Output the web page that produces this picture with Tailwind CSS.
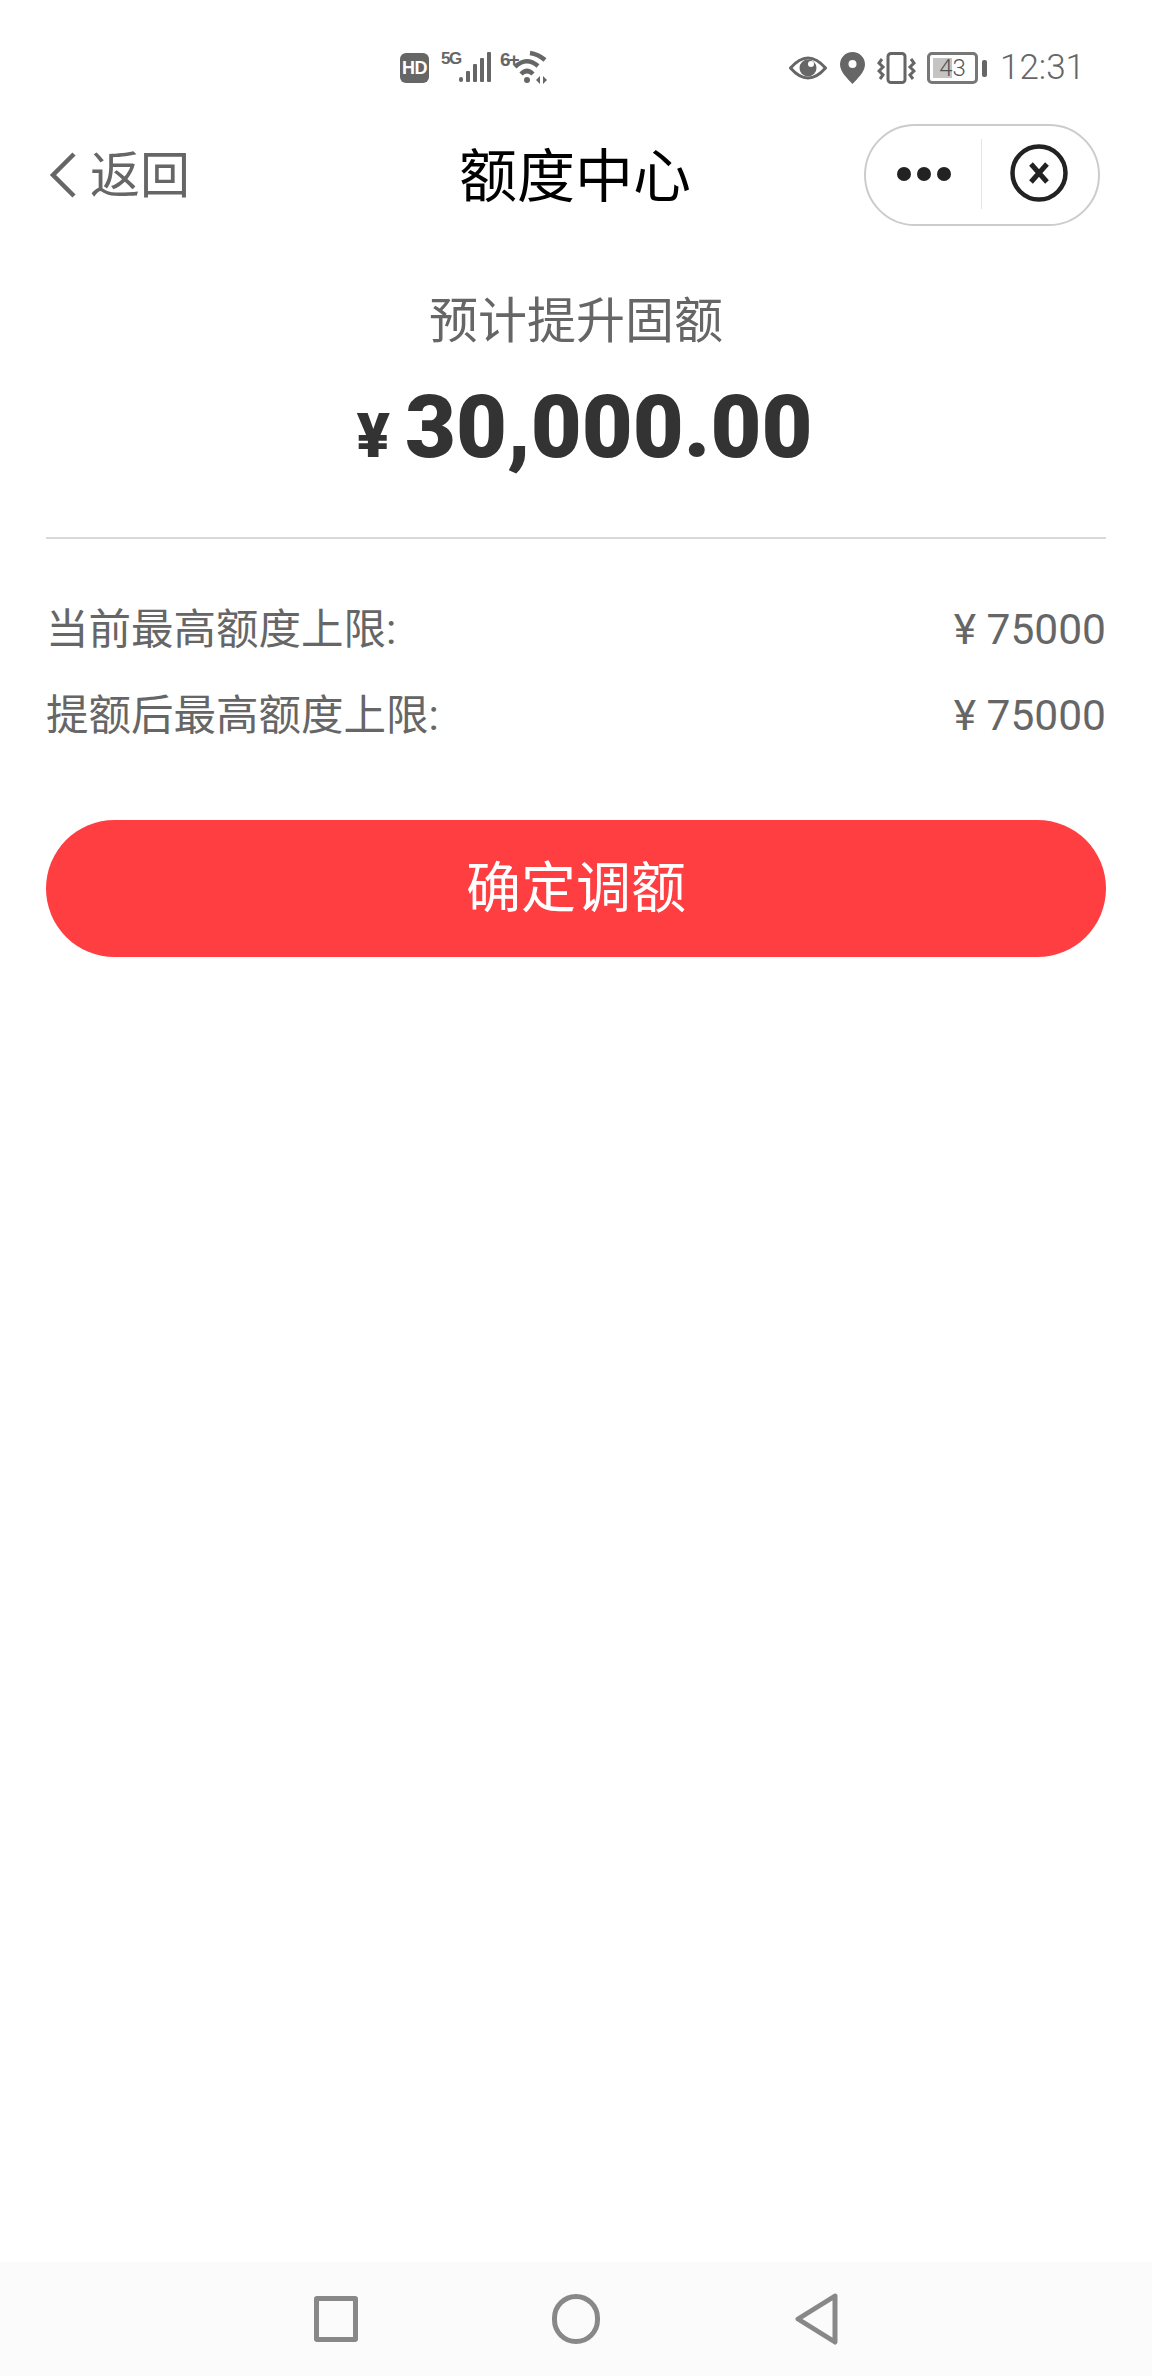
<!DOCTYPE html>
<html lang="zh-CN">
<head>
    <meta charset="UTF-8"/>
    <meta name="viewport" content="width=device-width, initial-scale=1.0"/>
    <title>额度中心</title>
    <script src="https://cdn.jsdelivr.net/npm/@tailwindcss/browser@4"></script>
</head>
<body class="bg-white h-[2376px] flex flex-col font-['Roboto','Noto_Sans_CJK_SC',sans-serif] text-[#666666]">
<!-- status bar -->
<div class="h-[124px] shrink-0 pt-[50px] pl-[400px] pr-[67px] flex items-start">
    <div class="w-[29px] h-[30px] mt-[3px] rounded-[6px] bg-[#666666] text-white text-[18px] leading-[30px] font-bold text-center font-['Liberation_Sans',sans-serif] tracking-[-0.5px]">HD</div>
    <div class="w-[17px] ml-[12px] mt-[1px] text-[17px] leading-[16px] font-bold font-['Liberation_Sans',sans-serif] tracking-[-1.5px]">5G</div>
    <svg class="w-[34px] h-[34px] mt-[1px]" viewBox="0 0 34 34" fill="#666666">
        <rect x="1" y="26" width="4" height="5" rx="2"/>
        <rect x="8" y="20" width="4" height="11" rx="1"/>
        <rect x="15" y="13" width="4" height="18" rx="1"/>
        <rect x="22" y="7" width="4" height="24" rx="1"/>
        <rect x="29" y="1" width="4" height="30" rx="1"/>
    </svg>
    <div class="w-[18px] ml-[8px] mt-[1px] text-[19px] leading-[18px] font-bold font-['Liberation_Sans',sans-serif] tracking-[-2px]">6+</div>
    <svg class="w-[36px] h-[36px] -ml-[6px] -mt-[1px]" viewBox="0 0 36 36" fill="none" stroke="#666666" stroke-width="4.5">
        <path d="M18 4 Q26 5 33 11"/>
        <path d="M3 18 Q14 7 26 17"/>
        <path d="M9 25 Q15 19 21 25"/>
        <circle cx="15" cy="31" r="3" fill="#666666" stroke="none"/>
        <path d="M28 27 L24 31 L28 35 Z M31 27 L35 31 L31 35 Z" fill="#666666" stroke="none"/>
    </svg>
    <div class="flex-1"></div>
    <svg class="w-[38px] h-[26px] mt-[5px]" viewBox="0 0 38 26">
        <path d="M1.5 13 Q19 -7 36.5 13 Q19 33 1.5 13 Z" fill="none" stroke="#666666" stroke-width="3"/>
        <circle cx="19" cy="13" r="8.5" fill="#666666"/>
        <circle cx="22" cy="9" r="3" fill="#ffffff"/>
    </svg>
    <svg class="w-[25px] h-[32px] ml-[13px] mt-[2px]" viewBox="0 0 25 32">
        <path d="M12.5 0 C19.5 0 25 5.5 25 12.5 C25 20 17 27 12.5 32 C8 27 0 20 0 12.5 C0 5.5 5.5 0 12.5 0 Z" fill="#666666"/>
        <circle cx="12.5" cy="12" r="4" fill="#ffffff"/>
    </svg>
    <svg class="w-[39px] h-[32px] ml-[12px] mt-[2px]" viewBox="0 0 39 32" fill="none" stroke="#666666">
        <rect x="11" y="1.5" width="17" height="29" rx="3" stroke-width="3"/>
        <path d="M5 7 L2 11 L6 15 L2 19 L6 23 L3 27" stroke-width="3"/>
        <path d="M34 7 L37 11 L33 15 L37 19 L33 23 L36 27" stroke-width="3"/>
    </svg>
    <div class="relative w-[51px] h-[32px] ml-[11px] mt-[2px] rounded-[5px] border-[3px] border-[#777777] overflow-hidden">
        <div class="w-[19px] h-[20px] mt-[3px] ml-[3px] bg-[#c4c4c4]"></div>
        <div class="absolute inset-0 text-center text-[24px] leading-[26px] font-light text-[#555555]">43</div>
    </div>
    <div class="w-[5px] h-[17px] ml-[4px] mt-[10px] rounded-[2px] bg-[#666666]"></div>
    <div class="ml-[13px] text-[35px] leading-[36px] font-light">12:31</div>
</div>

<!-- nav -->
<header class="h-[102px] shrink-0 pl-[50px] pr-[52px] flex items-center">
    <div class="flex-1 flex items-center">
        <svg class="w-[30px] h-[48px] -ml-[2px]" viewBox="0 0 30 48" fill="none" stroke="#666666" stroke-width="4.5">
            <path d="M26 3 L5 24 L26 45"/>
        </svg>
        <span class="ml-[12px] mt-[2px] text-[50px] leading-[60px]">返回</span>
    </div>
    <h1 class="mt-[3px] text-black text-[58px] leading-[70px] font-normal">额度中心</h1>
    <div class="flex-1 flex justify-end">
        <div class="w-[236px] h-[102px] rounded-full border-2 border-[#cccccc] bg-white flex items-center">
            <div class="w-[116px] h-[70px] -mt-[2px] border-r border-[#e5e5e5] flex items-center justify-center gap-[6px] pl-[1px]">
                <i class="w-[14px] h-[14px] rounded-full bg-[#222222]"></i>
                <i class="w-[14px] h-[14px] rounded-full bg-[#222222]"></i>
                <i class="w-[14px] h-[14px] rounded-full bg-[#222222]"></i>
            </div>
            <svg class="w-[58px] h-[58px] ml-[28px] -mt-[4px]" viewBox="0 0 58 58" fill="none" stroke="#222222">
                <circle cx="29" cy="29" r="26.5" stroke-width="4.5"/>
                <path d="M21 20 L37 38 M37 20 L21 38" stroke-width="5"/>
            </svg>
        </div>
    </div>
</header>

<main class="flex-1 px-[46px]">
    <!-- amount -->
    <section class="h-[313px] border-b-2 border-[#d8d8d8] flex flex-col items-center">
        <p class="mt-[61px] text-[49px] leading-[70px]">预计提升固额</p>
        <div class="mt-[15px] pl-[17px] flex items-baseline text-[#333333] font-['Roboto',sans-serif] font-black">
            <span class="text-[62px] leading-[110px]">¥</span>
            <span class="ml-[15px] text-[88px] leading-[110px]">30,000.00</span>
        </div>
    </section>

    <!-- rows -->
    <div class="mt-[48px] text-[42.5px] leading-[86px]">
        <div class="flex justify-between h-[86px]"><span>当前最高额度上限:</span><span>¥&nbsp;75000</span></div>
        <div class="flex justify-between h-[86px]"><span>提额后最高额度上限:</span><span>¥&nbsp;75000</span></div>
    </div>

    <button class="mt-[61px] w-full h-[137px] rounded-full bg-[#ff3e41] text-white text-[55px]">确定调额</button>
</main>

<!-- android nav -->
<nav class="h-[114px] shrink-0 bg-[#fbfbfb] pl-[314px] flex items-center">
    <div class="w-[44px] h-[46px] rounded-[3px] border-[5px] border-[#888888]"></div>
    <div class="w-[48px] h-[50px] ml-[194px] rounded-full border-[5px] border-[#888888]"></div>
    <svg class="w-[44px] h-[52px] ml-[195px]" viewBox="0 0 44 52" fill="none" stroke="#888888" stroke-width="5" stroke-linejoin="round">
        <path d="M40 3 L3 26 L40 49 Z"/>
    </svg>
</nav>
</body>
</html>
